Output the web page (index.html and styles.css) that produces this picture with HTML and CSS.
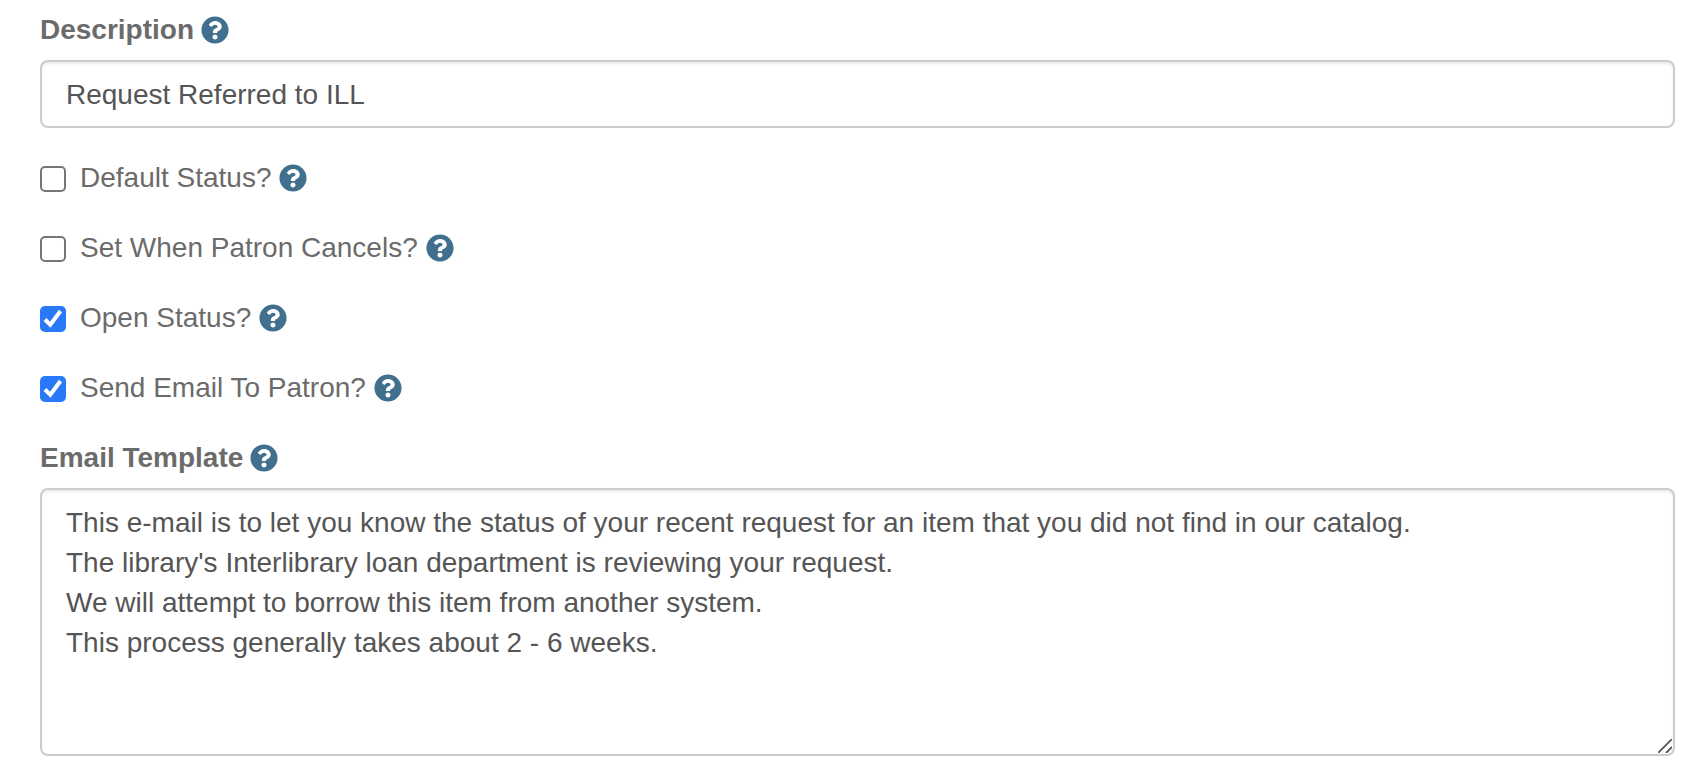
FILE: index.html
```html
<!DOCTYPE html>
<html lang="en">
<head>
<meta charset="utf-8">
<title>Request Status</title>
<link rel="stylesheet" href="styles.css">
</head>
<body>
<svg class="sprite" aria-hidden="true">
  <symbol id="help" viewBox="0 0 512 512">
    <path d="M504 256c0 136.997-111.043 248-248 248S8 392.997 8 256C8 119.083 119.043 8 256 8s248 111.083 248 248zM262.655 90c-54.497 0-89.255 22.957-116.549 63.758-3.536 5.286-2.353 12.415 2.715 16.258l34.699 26.31c5.205 3.947 12.621 3.008 16.665-2.122 17.864-22.658 30.113-35.797 57.303-35.797 20.429 0 45.698 13.148 45.698 32.958 0 14.976-12.363 22.667-32.534 33.976C247.128 238.528 216 254.941 216 296v4c0 6.627 5.373 12 12 12h56c6.627 0 12-5.373 12-12v-1.333c0-28.462 83.186-29.647 83.186-106.667 0-58.002-60.165-102-116.531-102zM256 338c-25.365 0-46 20.635-46 46 0 25.364 20.635 46 46 46s46-20.636 46-46c0-25.364-20.635-46-46-46z"/>
  </symbol>
</svg>
<form class="status-form">
  <div class="field">
    <div class="field-head">
      <label class="field-label" for="description">Description</label>
      <svg class="help"><use href="#help"/></svg>
    </div>
    <input class="control" type="text" id="description" value="Request Referred to ILL">
  </div>
  <div class="check-row">
    <input class="check" type="checkbox" id="default-status">
    <label for="default-status">Default Status?</label>
    <svg class="help"><use href="#help"/></svg>
  </div>
  <div class="check-row">
    <input class="check" type="checkbox" id="patron-cancels">
    <label for="patron-cancels">Set When Patron Cancels?</label>
    <svg class="help"><use href="#help"/></svg>
  </div>
  <div class="check-row">
    <input class="check" type="checkbox" id="open-status" checked>
    <label for="open-status">Open Status?</label>
    <svg class="help"><use href="#help"/></svg>
  </div>
  <div class="check-row">
    <input class="check" type="checkbox" id="send-email" checked>
    <label for="send-email">Send Email To Patron?</label>
    <svg class="help"><use href="#help"/></svg>
  </div>
  <div class="field">
    <div class="field-head">
      <label class="field-label" for="template">Email Template</label>
      <svg class="help"><use href="#help"/></svg>
    </div>
    <textarea class="control template" id="template" rows="6">This e-mail is to let you know the status of your recent request for an item that you did not find in our catalog.
The library's Interlibrary loan department is reviewing your request.
We will attempt to borrow this item from another system.
This process generally takes about 2 - 6 weeks.</textarea>
  </div>
</form>
</body>
</html>
```

FILE: styles.css
```css
* {
  box-sizing: border-box;
}

body {
  margin: 0;
  background: #fff;
  color: #6b6b6b;
  font-family: "Liberation Sans", Arial, sans-serif;
  font-size: 28px;
  line-height: 40px;
}

.sprite {
  display: none;
}

.status-form {
  display: flex;
  flex-direction: column;
  gap: 30px;
  padding: 10px 25px 24px 40px;
}

.field {
  display: flex;
  flex-direction: column;
  gap: 10px;
}

.field-head {
  display: flex;
  align-items: center;
  gap: 7px;
}

.field-label {
  font-weight: 700;
}

.help {
  width: 28px;
  height: 28px;
  fill: #41708e;
}

.control {
  display: block;
  width: 100%;
  margin: 0;
  padding: 13px 24px 11px;
  border: 2px solid #ccc;
  border-radius: 8px;
  background: #fff;
  box-shadow: inset 0 2px 2px rgba(0, 0, 0, 0.075);
  color: #555;
  font: inherit;
}

.template {
  resize: vertical;
  overflow: auto;
}

.template::-webkit-resizer {
  background: url("data:image/svg+xml,%3Csvg xmlns='http://www.w3.org/2000/svg' width='14' height='14'%3E%3Cpath d='M0 14 14 0M8 14l6-6' stroke='%23555' stroke-width='1.8' fill='none'/%3E%3C/svg%3E") no-repeat left top;
}

.check-row {
  display: flex;
  align-items: center;
  gap: 8px;
}

.check {
  appearance: none;
  width: 26px;
  height: 26px;
  margin: 2px 6px 0 0;
  border: 2px solid #767676;
  border-radius: 5px;
  background: #fff;
}

.check:checked {
  border: 0;
  background: #2878f8 url("data:image/svg+xml,%3Csvg xmlns='http://www.w3.org/2000/svg' viewBox='0 0 26 26'%3E%3Cpath d='M5 13.500 10.300 18.800 20.500 5' stroke='white' stroke-width='4' fill='none'/%3E%3C/svg%3E") center / 26px 26px no-repeat;
}
```
